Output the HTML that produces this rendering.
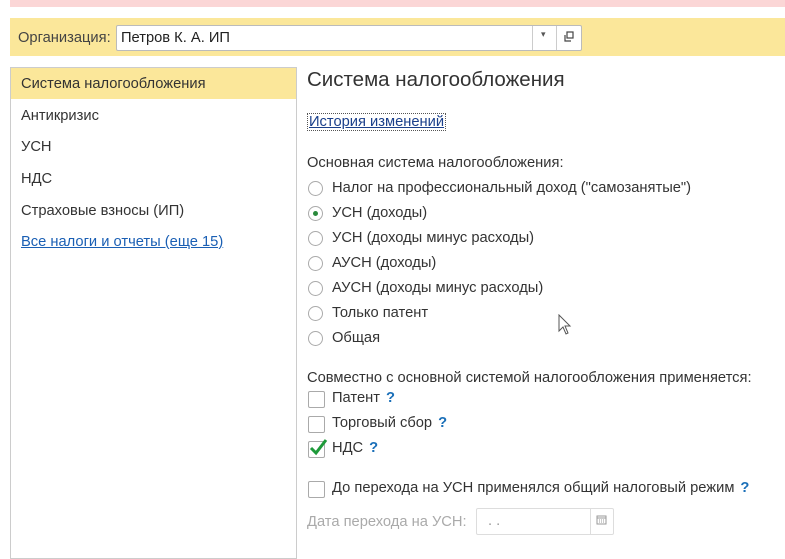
<!DOCTYPE html><html><head><meta charset="utf-8"><style>
body{margin:0;width:785px;height:540px;overflow:hidden;background:#fff;font-family:"Liberation Sans",Arial,sans-serif;font-size:14.7px;color:#333;position:relative}
.a{position:absolute;white-space:nowrap}
.rb{position:absolute;width:13px;height:13px;border:1px solid #aaa;border-radius:50%;background:#fff}
.cb{position:absolute;width:15px;height:15px;border:1px solid #aaa;border-radius:2px;background:#fff}
.q{color:#1a6fb8;font-weight:bold;margin-left:6px}
</style></head><body>
<div class="a" style="left:10px;top:0;width:775px;height:7px;background:#fbd6d6"></div>
<div class="a" style="left:10px;top:18px;width:775px;height:38px;background:#fbe79a"></div>
<div class="a" style="left:18px;top:30px;color:#444">Организация:</div>
<div class="a" style="left:116px;top:25px;width:464px;height:24px;border:1px solid #bbb;border-radius:2px;background:#fff"></div>
<div class="a" style="left:121px;top:30px;color:#222">Петров К. А. ИП</div>
<div class="a" style="left:532px;top:26px;width:1px;height:24px;background:#ccc"></div>
<div class="a" style="left:556px;top:26px;width:1px;height:24px;background:#ccc"></div>
<div class="a" style="left:541px;top:29px;font-size:9px;color:#555">▾</div>
<svg class="a" style="left:563px;top:31px" width="12" height="12"><rect x="4" y="1" width="6" height="6" fill="none" stroke="#444" stroke-width="1.2"/><path d="M2 4v6h6" fill="none" stroke="#444" stroke-width="1.2"/></svg>
<div class="a" style="left:10px;top:67px;width:285px;height:490px;border:1px solid #ccc"></div>
<div class="a" style="left:11px;top:68px;width:285px;height:31px;background:#fbe79a"></div>
<div class="a" style="left:21px;top:76px">Система налогообложения</div>
<div class="a" style="left:21px;top:108px">Антикризис</div>
<div class="a" style="left:21px;top:139px">УСН</div>
<div class="a" style="left:21px;top:171px">НДС</div>
<div class="a" style="left:21px;top:203px">Страховые взносы (ИП)</div>
<div class="a" style="left:21px;top:234px;color:#1a5fb4;text-decoration:underline">Все налоги и отчеты (еще 15)</div>
<div class="a" style="left:307px;top:68px;font-size:20.5px;color:#333">Система налогообложения</div>
<div class="a" style="left:307px;top:113px;color:#1a3f8a;text-decoration:underline;border:1px dotted #555;padding:0 1px">История изменений</div>
<div class="a" style="left:307px;top:155px">Основная система налогообложения:</div>
<div class="rb" style="left:308px;top:181px"></div><div class="a" style="left:332px;top:180px">Налог на профессиональный доход ("самозанятые")</div>
<div class="rb" style="left:308px;top:206px"></div><div class="a" style="left:313px;top:211px;width:5px;height:5px;border-radius:50%;background:#2a8a3c"></div><div class="a" style="left:332px;top:205px">УСН (доходы)</div>
<div class="rb" style="left:308px;top:231px"></div><div class="a" style="left:332px;top:230px">УСН (доходы минус расходы)</div>
<div class="rb" style="left:308px;top:256px"></div><div class="a" style="left:332px;top:255px">АУСН (доходы)</div>
<div class="rb" style="left:308px;top:281px"></div><div class="a" style="left:332px;top:280px">АУСН (доходы минус расходы)</div>
<div class="rb" style="left:308px;top:306px"></div><div class="a" style="left:332px;top:305px">Только патент</div>
<div class="rb" style="left:308px;top:331px"></div><div class="a" style="left:332px;top:330px">Общая</div>
<div class="a" style="left:307px;top:370px">Совместно с основной системой налогообложения применяется:</div>
<div class="cb" style="left:308px;top:391px"></div><div class="a" style="left:332px;top:390px">Патент<span class="q">?</span></div>
<div class="cb" style="left:308px;top:416px"></div><div class="a" style="left:332px;top:415px">Торговый сбор<span class="q">?</span></div>
<div class="cb" style="left:308px;top:441px"></div>
<svg class="a" style="left:308px;top:438px" width="20" height="18"><path d="M3 10l5 5L18 2" fill="none" stroke="#1e9a3a" stroke-width="3"/></svg>
<div class="a" style="left:332px;top:440px">НДС<span class="q">?</span></div>
<div class="cb" style="left:308px;top:481px"></div><div class="a" style="left:332px;top:480px">До перехода на УСН применялся общий налоговый режим<span class="q">?</span></div>
<div class="a" style="left:307px;top:514px;color:#aaa">Дата перехода на УСН:</div>
<div class="a" style="left:476px;top:508px;width:136px;height:25px;border:1px solid #ddd;border-radius:2px"></div>
<div class="a" style="left:590px;top:509px;width:1px;height:25px;background:#ddd"></div>
<div class="a" style="left:488px;top:513px;color:#999">. .</div>
<svg class="a" style="left:596px;top:514px" width="11" height="11"><rect x="1" y="2" width="9" height="8" fill="none" stroke="#999"/><path d="M1 4h9M3 6h1M5 6h1M7 6h1M3 8h1M5 8h1M7 8h1" stroke="#999"/></svg>
<svg class="a" style="left:558px;top:314px" width="14" height="22"><path d="M1 1v16l4-4 3 7 2-1-3-7h5z" fill="#fff" stroke="#555"/></svg>
</body></html>
